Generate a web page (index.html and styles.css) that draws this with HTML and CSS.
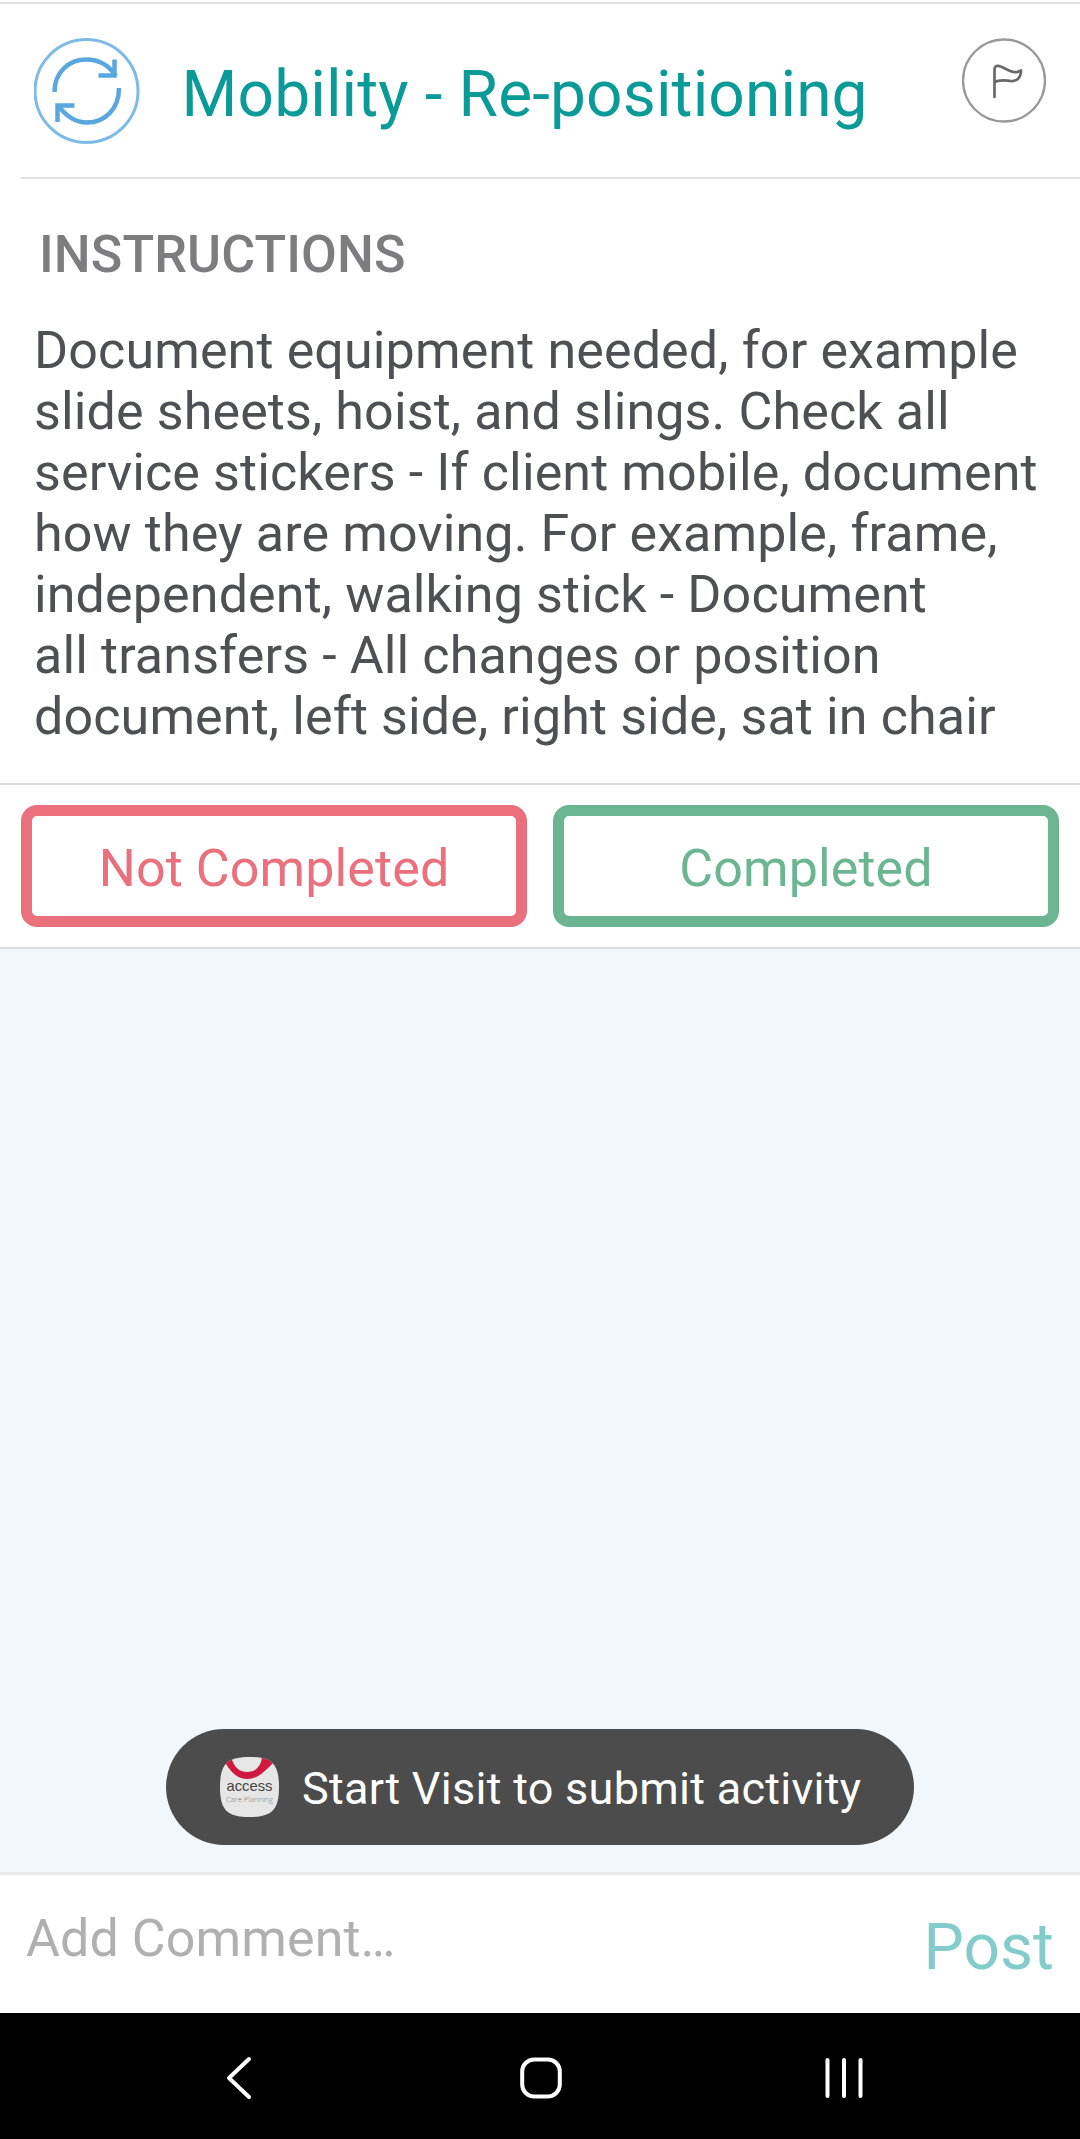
FILE: index.html
```html
<!DOCTYPE html>
<html lang="en">
<head>
<meta charset="utf-8">
<title>Mobility - Re-positioning</title>
<link rel="stylesheet" href="styles.css">
</head>
<body>
<main class="screen">
  <header class="header">
    <svg class="sync" viewBox="0 0 106 106" fill="none" stroke="#4a9fdc">
      <circle cx="52.500" cy="53" r="51.500" stroke="#7dbbe6" stroke-width="3"/>
      <path d="M20.500 54C20.500 34 35 21.500 52.500 21.500C65 21.500 75 27.500 82 38M80.500 21.500V37.500H64.500M85 50C85 71 71 84.500 53 84.500C41 84.500 31 77 24 67M23.500 84V67.500H40.500" stroke="#58a7de" stroke-width="4.500"/>
    </svg>
    <h1 class="title">Mobility - Re-positioning</h1>
    <svg class="flag" viewBox="0 0 84 84" fill="none">
      <circle cx="42" cy="42" r="41" stroke="#999" stroke-width="2.400"/>
      <path d="M32.500 58.500V31C32.500 25 39 28 42 29.500C49 33 53 35.500 59 32C59 40 54 43 49 42.500C43 42 38 40.500 32.500 43.500" stroke="#696969" stroke-width="2.700" stroke-linecap="round" stroke-linejoin="round"/>
    </svg>
  </header>
  <section class="instructions">
    <h2 class="label">INSTRUCTIONS</h2>
    <p class="body">Document equipment needed, for example<br>slide sheets, hoist, and slings. Check all<br>service stickers - If client mobile, document<br>how they are moving. For example, frame,<br>independent, walking stick - Document<br>all transfers - All changes or position<br>document, left side, right side, sat in chair</p>
  </section>
  <div class="actions">
    <button class="btn no">Not Completed</button>
    <button class="btn yes">Completed</button>
  </div>
  <section class="feed">
    <div class="toast">
      <svg class="logo" viewBox="0 0 59 60">
        <defs><clipPath id="tile"><path d="M29.500 0C52 0 59 7 59 30S52 60 29.500 60S0 53 0 30S7 0 29.500 0Z"/></clipPath></defs>
        <g clip-path="url(#tile)">
          <rect width="59" height="60" fill="#e6e6e6"/>
          <path d="M3 0L6 7C12 17 19 22 27 22C37 22 43 16 53 6L56 0H42C41 9 36 15 27 15C19 15 14 10 11 0Z" fill="#d0193f"/>
        </g>
        <text class="logo-name" x="6.500" y="34" textLength="46" lengthAdjust="spacingAndGlyphs">access</text>
        <text class="logo-sub" x="6" y="44.500" textLength="47" lengthAdjust="spacingAndGlyphs">Care Planning</text>
      </svg>
      <span class="toast-text">Start Visit to submit activity</span>
    </div>
  </section>
  <div class="comment">
    <span class="hint">Add Comment…</span>
    <span class="post">Post</span>
  </div>
  <nav class="nav">
    <svg viewBox="0 0 44 44"><path d="M31 3L11 22L31 41"/></svg>
    <svg viewBox="0 0 44 44"><rect x="2.200" y="3.500" width="37.600" height="37" rx="12"/></svg>
    <svg viewBox="0 0 44 44"><path d="M5.500 4V40M22 4V40M38.500 4V40"/></svg>
  </nav>
</main>
</body>
</html>
```
FILE: styles.css
```css
* { box-sizing: border-box; margin: 0; padding: 0; }
body { font-family: Roboto, "Liberation Sans", sans-serif; background: #fff; }
.screen { width: 1080px; height: 2139px; display: flex; flex-direction: column; }
.header {
  height: 179px;
  display: flex;
  align-items: flex-start;
  padding: 38px 34px 0 34px;
  background:
    linear-gradient(#dfe2e2, #dfe2e2) 0 2px / 100% 2px no-repeat,
    linear-gradient(#dfe2e2, #dfe2e2) 21px 177px / 100% 2px no-repeat;
}
.sync { width: 106px; height: 106px; }
.title { flex: 1; font-size: 64px; font-weight: 400; line-height: 76px; letter-spacing: .13px; color: #0a9a98; margin: 19px 0 0 41.5px; white-space: nowrap; }
.flag { width: 84px; height: 85px; }
.instructions { height: 604px; padding-top: 46px; }
.label { font-size: 52px; line-height: 60px; letter-spacing: .1px; font-weight: 500; color: #7d7d7f; padding-left: 39px; }
.body { font-size: 52px; line-height: 61px; letter-spacing: .13px; color: #4f5053; margin-top: 35px; padding-left: 34px; white-space: nowrap; }
.actions { height: 166px; border-top: 2px solid #ddd; border-bottom: 2px solid #d8dcdf; padding: 20px 21px; display: flex; gap: 26px; }
.btn { flex: 1; border: 11px solid; border-radius: 16px; background: #fff; font: 400 52px Roboto, sans-serif; letter-spacing: .12px; padding-top: 4px; }
.no { color: #e9707c; }
.yes { color: #6bb592; }
.feed { flex: 1; background: #f1f7fa; display: flex; flex-direction: column; justify-content: flex-end; align-items: center; padding-bottom: 27px; }
.toast { width: 748px; height: 116px; border-radius: 58px; background: #4c4c4c; display: flex; align-items: center; padding-left: 54px; }
.logo { width: 59px; height: 60px; }
.logo-name { font: 14.5px "Liberation Sans", sans-serif; fill: #444; }
.logo-sub { font: 300 8px "Open Sans", sans-serif; fill: #777; }
.toast-text { color: #fff; font-size: 45px; letter-spacing: .28px; margin-left: 23px; padding-top: 3px; white-space: nowrap; }
.comment { height: 141px; border-top: 3px solid #ebebeb; display: flex; justify-content: space-between; padding: 33px 26px 0; }
.hint { font-size: 52px; line-height: 61px; letter-spacing: .1px; color: #b0b0b0; }
.post { font-size: 64px; line-height: 76px; padding-top: 2px; color: #84cccb; }
.nav { height: 126px; background: #000; display: flex; justify-content: space-between; padding: 43px 214px 0 218px; }
.nav svg { width: 44px; height: 44px; fill: none; stroke: #fff; stroke-width: 4; stroke-linecap: round; stroke-linejoin: round; }
```
